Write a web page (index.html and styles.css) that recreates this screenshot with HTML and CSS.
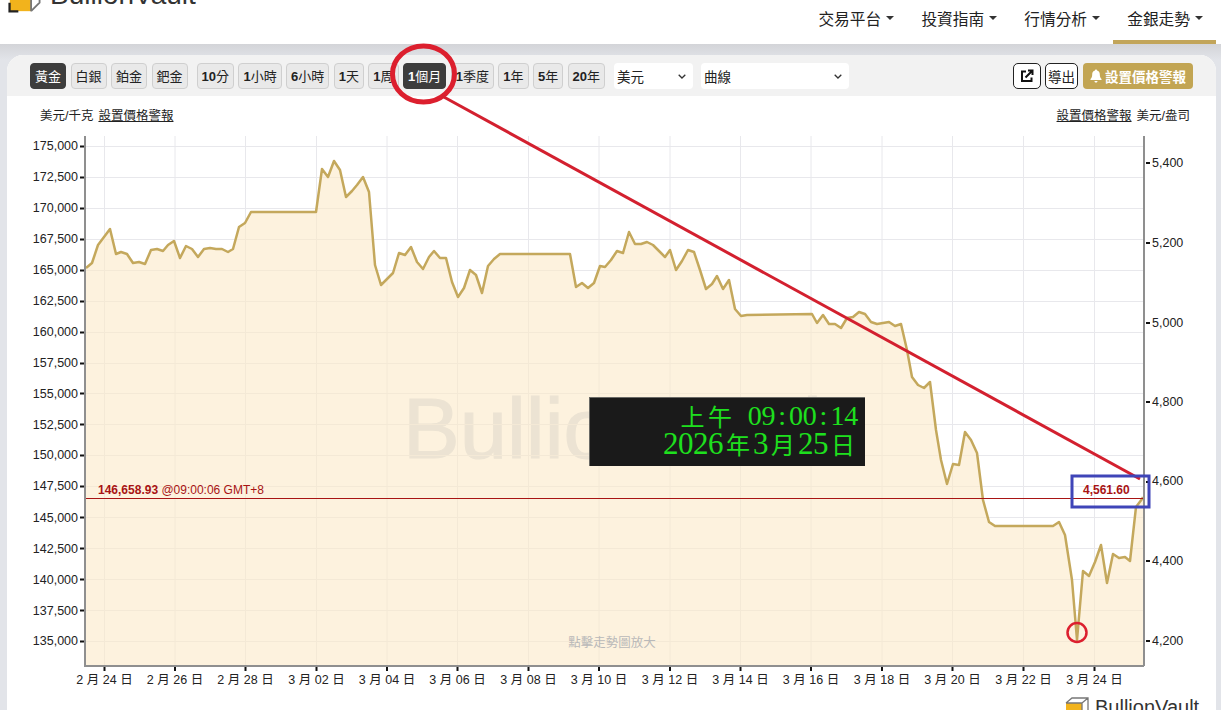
FILE: index.html
```html
<!DOCTYPE html>
<html lang="zh-Hant">
<head>
<meta charset="utf-8">
<title>BullionVault</title>
<link rel="stylesheet" href="styles.css">
</head>
<body>
<header class="topbar">
  <div class="brand">
    <svg class="brand-icon" viewBox="0 0 24 24"><path class="cube-front" d="M2 8h15v14H2z"/><path class="cube-edge" d="M2 8l6-6h15v14l-6 6M17 8l6-6M2 8h15v14"/><path class="cube-corner" d="M1 16v7h7v-1.600H2.600V16z"/></svg>
    <span class="brand-name">BullionVault</span>
  </div>
  <nav class="nav">
    <a class="nav-item">交易平台<i class="caret"></i></a>
    <a class="nav-item">投資指南<i class="caret"></i></a>
    <a class="nav-item">行情分析<i class="caret"></i></a>
    <a class="nav-item nav-active">金銀走勢<i class="caret"></i></a>
  </nav>
</header>
<main class="card">
  <div class="toolbar">
    <div class="group group-metals">
      <button class="btn btn-dark">黃金</button>
      <button class="btn">白銀</button>
      <button class="btn">鉑金</button>
      <button class="btn">鈀金</button>
    </div>
    <div class="group group-ranges">
      <button class="btn"><b>10</b>分</button>
      <button class="btn"><b>1</b>小時</button>
      <button class="btn"><b>6</b>小時</button>
      <button class="btn"><b>1</b>天</button>
      <button class="btn"><b>1</b>周</button>
      <button class="btn btn-dark"><b>1</b>個月</button>
      <button class="btn"><b>1</b>季度</button>
      <button class="btn"><b>1</b>年</button>
      <button class="btn"><b>5</b>年</button>
      <button class="btn"><b>20</b>年</button>
    </div>
    <div class="sel sel-currency">美元<svg class="chev" viewBox="0 0 8 5"><path d="M.7.7L4 4 7.300.7"/></svg></div>
    <div class="sel sel-type">曲線<svg class="chev" viewBox="0 0 8 5"><path d="M.7.7L4 4 7.300.7"/></svg></div>
    <div class="tools">
      <button class="tool tool-share"><svg viewBox="0 0 16 16" class="share-icon"><path d="M7 3.500H3v9.500h9.500V9.500" /><path d="M6.500 9.500L13 3M9 2.500h4.500V7"/></svg></button>
      <button class="tool tool-export">導出</button>
      <button class="alert-btn"><svg viewBox="0 0 12 14" class="bell"><path d="M6 0.500c.7 0 1 .5 1 1 2 .5 2.800 2 2.800 4 0 2.500.7 3.500 1.700 4.500v1H.5v-1c1-1 1.700-2 1.700-4.500 0-2 .8-3.500 2.800-4 0-.5.300-1 1-1zM4.500 12h3c0 1-.7 1.600-1.500 1.600S4.500 13 4.500 12z"/></svg>設置價格警報</button>
    </div>
  </div>
  <div class="units">
    <span>美元/千克 <u>設置價格警報</u></span>
    <span><u>設置價格警報</u> 美元/盎司</span>
  </div>
  <div class="chart">
    <svg class="chart-svg" viewBox="7 132 1209 578">
      <text class="watermark" x="403" y="458">BullionVault</text>
      <path class="grid" d="M86 146.500H1144M86 177.500H1144M86 208.500H1144M86 239.500H1144M86 270.500H1144M86 301.500H1144M86 332.500H1144M86 363.500H1144M86 393.500H1144M86 424.500H1144M86 455.500H1144M86 486.500H1144M86 517.500H1144M86 548.500H1144M86 579.500H1144M86 610.500H1144M86 641.500H1144M104.500 136V665M175 136V665M245.500 136V665M316.500 136V665M387 136V665M457.500 136V665M528.500 136V665M599 136V665M670 136V665M740.500 136V665M811 136V665M882 136V665M952.500 136V665M1023.500 136V665M1094.500 136V665"/>
      <polygon class="area" points="86,268 92,263 98,245 104,237 110,229 116,254 121,252 127,254 133,263 139,262 145,264 151,250 157,249 163,251 168,245 174,241 180,258 186,246 192,249 198,257 204,249 210,248 216,249 222,249 228,252 233,249 239,227 245,223 251,212 316,212 322,169 328,177 334,161 340,170 346,197 352,191 357,185 363,177 369,192 375,265 381,285 387,279 393,273 399,253 405,255 411,247 417,262 423,269 429,257 434,251 440,258 446,258 452,282 458,297 464,288 470,270 476,275 482,293 488,266 494,259 500,254 570,254 576,287 582,283 588,288 594,283 600,266 605,267 611,260 617,251 623,253 629,232 635,244 641,244 647,242 653,245 659,251 665,257 670,250 676,270 682,261 688,250 694,252 700,270 706,289 712,284 717,276 723,289 729,280 735,309 741,316 747,315 812,314 817,323 823,315 829,324 835,324 841,328 847,318 853,317 859,312 865,314 871,322 877,324 883,323 889,322 895,326 901,324 907,350 912,377 918,385 924,388 930,382 936,430 941,460 947,484 953,464 959,465 965,432 971,440 977,453 983,500 989,522 995,526 1053,526 1059,522 1065,535 1072,580 1077,640 1083,571 1089,576 1095,562 1101,545 1107,583 1113,554 1119,558 1125,557 1130,561 1136,507 1142,499 1143,497 1143,665 86,665"/>
      <polyline class="price" points="86,268 92,263 98,245 104,237 110,229 116,254 121,252 127,254 133,263 139,262 145,264 151,250 157,249 163,251 168,245 174,241 180,258 186,246 192,249 198,257 204,249 210,248 216,249 222,249 228,252 233,249 239,227 245,223 251,212 316,212 322,169 328,177 334,161 340,170 346,197 352,191 357,185 363,177 369,192 375,265 381,285 387,279 393,273 399,253 405,255 411,247 417,262 423,269 429,257 434,251 440,258 446,258 452,282 458,297 464,288 470,270 476,275 482,293 488,266 494,259 500,254 570,254 576,287 582,283 588,288 594,283 600,266 605,267 611,260 617,251 623,253 629,232 635,244 641,244 647,242 653,245 659,251 665,257 670,250 676,270 682,261 688,250 694,252 700,270 706,289 712,284 717,276 723,289 729,280 735,309 741,316 747,315 812,314 817,323 823,315 829,324 835,324 841,328 847,318 853,317 859,312 865,314 871,322 877,324 883,323 889,322 895,326 901,324 907,350 912,377 918,385 924,388 930,382 936,430 941,460 947,484 953,464 959,465 965,432 971,440 977,453 983,500 989,522 995,526 1053,526 1059,522 1065,535 1072,580 1077,640 1083,571 1089,576 1095,562 1101,545 1107,583 1113,554 1119,558 1125,557 1130,561 1136,507 1142,499 1143,497"/>
      <path class="spot" d="M86 498.500H1144"/>
      <path class="axis" d="M85 136V666H1144M1144 136V666"/>
      <path class="ticks" d="M80 146.500H84M80 177.500H84M80 208.500H84M80 239.500H84M80 270.500H84M80 301.500H84M80 332.500H84M80 363.500H84M80 393.500H84M80 424.500H84M80 455.500H84M80 486.500H84M80 517.500H84M80 548.500H84M80 579.500H84M80 610.500H84M80 641.500H84M1146 163H1150M1146 243H1150M1146 323H1150M1146 402H1150M1146 482H1150M1146 561H1150M1146 641H1150M104.500 667V671M175 667V671M245.500 667V671M316.500 667V671M387 667V671M457.500 667V671M528.500 667V671M599 667V671M670 667V671M740.500 667V671M811 667V671M882 667V671M952.500 667V671M1023.500 667V671M1094.500 667V671"/>
      <g class="ylabels-left">
        <text x="78" y="150">175,000</text><text x="78" y="181">172,500</text><text x="78" y="212">170,000</text><text x="78" y="243">167,500</text><text x="78" y="274">165,000</text><text x="78" y="305">162,500</text><text x="78" y="336">160,000</text><text x="78" y="367">157,500</text><text x="78" y="398">155,000</text><text x="78" y="429">152,500</text><text x="78" y="459">150,000</text><text x="78" y="490">147,500</text><text x="78" y="522">145,000</text><text x="78" y="553">142,500</text><text x="78" y="584">140,000</text><text x="78" y="615">137,500</text><text x="78" y="645">135,000</text>
      </g>
      <g class="ylabels-right">
        <text x="1152" y="167">5,400</text><text x="1152" y="247">5,200</text><text x="1152" y="327">5,000</text><text x="1152" y="406">4,800</text><text x="1152" y="485">4,600</text><text x="1152" y="565">4,400</text><text x="1152" y="645">4,200</text>
      </g>
      <g class="xlabels">
        <text x="104.500" y="684">2 月 24 日</text><text x="175" y="684">2 月 26 日</text><text x="245.500" y="684">2 月 28 日</text><text x="316.500" y="684">3 月 02 日</text><text x="387" y="684">3 月 04 日</text><text x="457.500" y="684">3 月 06 日</text><text x="528.500" y="684">3 月 08 日</text><text x="599" y="684">3 月 10 日</text><text x="670" y="684">3 月 12 日</text><text x="740.500" y="684">3 月 14 日</text><text x="811" y="684">3 月 16 日</text><text x="882" y="684">3 月 18 日</text><text x="952.500" y="684">3 月 20 日</text><text x="1023.500" y="684">3 月 22 日</text><text x="1094.500" y="684">3 月 24 日</text>
      </g>
      <text class="spot-text" x="98" y="494"><tspan class="spot-bold">146,658.93</tspan> @09:00:06 GMT+8</text>
      <text class="spot-text spot-bold" x="1083" y="494">4,561.60</text>
      <text class="hint" x="612" y="647">點擊走勢圖放大</text>
      <g transform="translate(1065 697)">
        <path class="cube-front" d="M1 6h16v16H1z"/><path class="cube-edge" d="M1 6l6-5h16v15l-6 6M17 6l6-5M1 6h16v16"/>
      </g>
      <text class="foot-brand" x="1095" y="714">BullionVault</text>
    </svg>
    <div class="clock">
      <div class="clock-line line-time"><span class="cjk">上</span><span class="cjk">午</span><span class="d"> </span><span class="d">0</span><span class="d">9</span><span class="d">:</span><span class="d">0</span><span class="d">0</span><span class="d">:</span><span class="d">1</span><span class="d">4</span></div>
      <div class="clock-line line-date"><span class="d">2</span><span class="d">0</span><span class="d">2</span><span class="d">6</span><span class="cjk">年</span><span class="d">3</span><span class="cjk">月</span><span class="d">2</span><span class="d">5</span><span class="cjk">日</span></div>
    </div>
  </div>
</main>
<svg class="marks" viewBox="0 0 1221 710">
  <ellipse class="mark-red" cx="423.500" cy="74" rx="31" ry="28"/>
  <path class="mark-line" d="M442 96L1140 479"/>
  <circle class="mark-small" cx="1077" cy="632.500" r="9.500"/>
  <rect class="mark-blue" x="1072" y="476" width="77" height="31"/>
</svg>
</body>
</html>
```
FILE: styles.css
```css
* { box-sizing: border-box; }
html, body { margin: 0; height: 710px; overflow: hidden; }
body {
  position: relative;
  display: flex;
  flex-direction: column;
  background: linear-gradient(#d3d4d8 44px, #e2e4e9 60px);
  font-family: "Liberation Sans", "Noto Sans CJK TC", sans-serif;
  color: #222;
}
.topbar {
  flex: none;
  height: 44px;
  background: #fff;
  display: flex;
  justify-content: space-between;
  overflow: hidden;
}
.brand { display: flex; align-items: flex-end; gap: 9px; margin: -20px 0 0 7px; height: 34px; }
.brand-icon { width: 34px; height: 34px; flex: none; }
.brand-name { font-size: 28px; line-height: 28px; color: #333; margin-bottom: 5px; }
.cube-front { fill: #f2b31c; }
.cube-edge { fill: none; stroke: #777; stroke-width: 1.300; }
.cube-corner { fill: #222; }
.nav { display: flex; margin-right: 5px; }
.nav-item {
  display: flex;
  align-items: center;
  padding: 0 13px 4px 14.200px;
  font-size: 15.700px;
  color: #222;
  border-bottom: 4px solid transparent;
}
.nav-active { border-bottom-color: #c2a55a; }
.caret { width: 0; height: 0; border: 4px solid transparent; border-top-color: #333; border-bottom: 0; margin-left: 5px; }
.card {
  flex: 1;
  margin: 11px 5px 0 7px;
  background: #fff;
  border-radius: 16px 16px 0 0;
  display: flex;
  flex-direction: column;
  overflow: hidden;
}
.toolbar {
  flex: none;
  height: 41px;
  background: #f2f2f2;
  display: flex;
  align-items: flex-start;
  padding: 8px 23px 0 23px;
}
.group { display: flex; margin-right: 9px; }
.group-metals { gap: 4.500px; }
.group-ranges { gap: 4.400px; }
.btn {
  height: 26px;
  padding: 0 4px;
  border: 1px solid #cfcfcf;
  border-radius: 4px;
  background: #e9e9e9;
  color: #222;
  font: 13px/1 "Liberation Sans", "Noto Sans CJK TC", sans-serif;
}
.btn-dark { background: #3d3d3d; border-color: #3d3d3d; color: #fff; }
.sel {
  height: 26px;
  padding: 0 7px 0 3px;
  border-radius: 4px;
  background: #fff;
  color: #222;
  font-size: 13.500px;
  display: flex;
  align-items: center;
  justify-content: space-between;
}
.chev { width: 8px; height: 5px; fill: none; stroke: #333; stroke-width: 1.300; }
.sel-currency { width: 79px; margin-right: 8px; }
.sel-type { width: 148px; }
.tools { margin-left: auto; display: flex; gap: 4px; }
.tool {
  height: 26px;
  padding: 0;
  border: 1px solid #222;
  border-radius: 5px;
  background: #fff;
  color: #222;
  font: 13.500px "Liberation Sans", "Noto Sans CJK TC", sans-serif;
}
.tool-share { width: 28px; display: flex; align-items: center; justify-content: center; }
.tool-export { width: 33px; }
.share-icon { width: 16px; height: 16px; fill: none; stroke: #111; stroke-width: 2; }
.alert-btn {
  width: 110px;
  height: 26px;
  padding: 0;
  margin-left: 1px;
  border: 0;
  border-radius: 4px;
  background: #c2a553;
  color: #fff;
  font: bold 13.500px "Liberation Sans", "Noto Sans CJK TC", sans-serif;
  display: flex;
  align-items: center;
  justify-content: center;
  gap: 3px;
}
.bell { width: 12px; height: 14px; fill: #fff; }
.units {
  flex: none;
  height: 36px;
  display: flex;
  justify-content: space-between;
  align-items: flex-start;
  padding: 12px 26px 0 33px;
  font-size: 12.500px;
  word-spacing: 1.500px;
  line-height: 16px;
  color: #222;
}
.chart { flex: 1; position: relative; }
.chart-svg { display: block; width: 1209px; height: 578px; }
.chart-svg text { font-family: "Liberation Sans", "Noto Sans CJK TC", sans-serif; font-size: 12.500px; fill: #222; }
.chart-svg .watermark { font-size: 85px; fill: #d5dae3; stroke: #d5dae3; stroke-width: 1.200; }
.grid { fill: none; stroke: #e8e8ec; stroke-width: 1; }
.area { fill: #fbe9c8; fill-opacity: .6; }
.price { fill: none; stroke: #c4a85c; stroke-width: 2.500; stroke-linejoin: round; }
.spot { stroke: #a81414; stroke-width: 1; }
.axis { fill: none; stroke: #8f8f8f; stroke-width: 2; }
.ticks { stroke: #111; stroke-width: 2; }
.ylabels-left text { text-anchor: end; }
.xlabels text { text-anchor: middle; }
.chart-svg .spot-text { fill: #a81414; font-size: 12px; }
.chart-svg .spot-bold { font-weight: bold; }
.chart-svg .hint { fill: #b9b9b9; text-anchor: middle; }
.chart-svg .foot-brand { font-size: 20px; fill: #333; }
.clock {
  position: absolute;
  left: 582px;
  top: 265px;
  width: 276px;
  height: 69px;
  padding: 4px 7px 0 0;
  background: #1a1a1a;
  border-top: 1px solid #6a6a66;
  border-left: 1px solid #6a6a66;
  color: #1ee01e;
  font-family: "Liberation Serif", serif;
}
.clock-line { display: flex; justify-content: flex-end; align-items: center; white-space: pre; }
.d, .cjk { display: block; text-align: center; }
.cjk { font-family: "Noto Sans CJK TC", sans-serif; font-size: 24px; }
.line-time { height: 27px; font-size: 28px; line-height: 27px; }
.line-time .d { width: 13.800px; }
.line-time .cjk { width: 27.600px; line-height: 27px; }
.line-date { height: 30px; font-size: 31px; line-height: 30px; }
.line-date .d { width: 15px; }
.line-date .cjk { width: 30px; line-height: 30px; }
.marks { position: absolute; left: 0; top: 0; width: 1221px; height: 710px; pointer-events: none; }
.mark-red { fill: none; stroke: #dc1f2e; stroke-width: 5; }
.mark-line { stroke: #d3202f; stroke-width: 3; }
.mark-small { fill: none; stroke: #dc1f2e; stroke-width: 2.500; }
.mark-blue { fill: none; stroke: #3f45b8; stroke-width: 3; }
```
